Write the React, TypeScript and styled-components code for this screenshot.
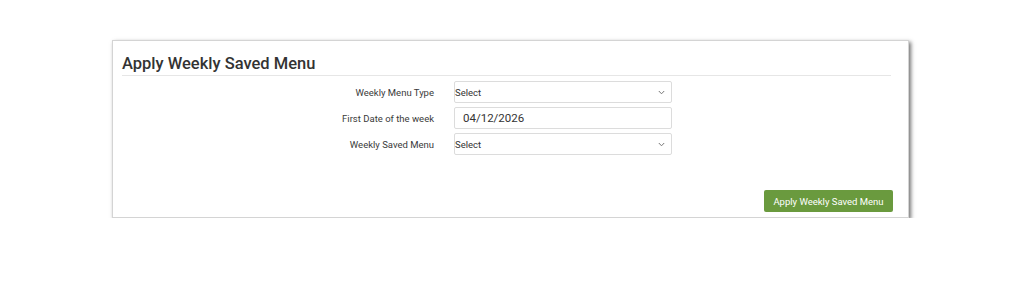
import React from "react";
import styled, { createGlobalStyle } from "styled-components";

const Global = createGlobalStyle`
  html, body { margin: 0; padding: 0; background: #ffffff; }
  body { font-family: Roboto, "Liberation Sans", Arial, sans-serif; color: #333; }
`;

const Page = styled.div`
  padding: 40px 0 0 112px;
`;

const Card = styled.section`
  box-sizing: border-box;
  width: 797px;
  height: 178px;
  background: #fff;
  border: 1px solid #d4d4d4;
  box-shadow: 2px 2px 4px rgba(0, 0, 0, 0.55);
  padding: 0 17px 0 9px;
  display: flex;
  flex-direction: column;
`;

const Title = styled.h2`
  margin: 0;
  padding-top: 11px;
  height: 23px;
  font-size: 16.5px;
  font-weight: 500;
  color: #333;
  line-height: 23px;
  border-bottom: 1px solid #e6e6e6;
`;

const Form = styled.div`
  margin-top: 5px;
  display: grid;
  grid-template-columns: 312px 218px;
  column-gap: 20px;
  row-gap: 4px;
  align-items: center;
`;

const Label = styled.label`
  text-align: right;
  font-size: 9.5px;
  color: #3a3a3a;
`;

const Field = styled.div<{ $indent?: boolean }>`
  box-sizing: border-box;
  height: 22px;
  border: 1px solid #dcdcdc;
  border-radius: 2px;
  background: #fff;
  display: flex;
  align-items: center;
  justify-content: space-between;
  padding: ${(p) => (p.$indent ? "0 0 0 8px" : "0 6px 0 0")};
  font-size: ${(p) => (p.$indent ? "11.5px" : "9.5px")};
  color: #333;
`;

const Chevron = styled.svg`
  width: 7px;
  height: 5px;
`;

const Footer = styled.div`
  margin-top: auto;
  margin-bottom: 5px;
  display: flex;
  justify-content: flex-end;
`;

const Button = styled.button`
  box-sizing: border-box;
  width: 129px;
  height: 22px;
  border: none;
  border-radius: 2px;
  background: #6a9a3e;
  color: #fff;
  font-family: Roboto, "Liberation Sans", Arial, sans-serif;
  font-size: 9.5px;
  padding: 0;
  margin-right: -2px;
`;

const Arrow = () => (
  <Chevron viewBox="0 0 7 5">
    <path d="M0.8 1 L3.5 3.8 L6.2 1" fill="none" stroke="#777" strokeWidth="1" />
  </Chevron>
);

export default function App() {
  return (
    <>
      <Global />
      <Page>
        <Card>
          <Title>Apply Weekly Saved Menu</Title>
          <Form>
            <Label>Weekly Menu Type</Label>
            <Field>
              <span>Select</span>
              <Arrow />
            </Field>
            <Label>First Date of the week</Label>
            <Field $indent>
              <span>04/12/2026</span>
            </Field>
            <Label>Weekly Saved Menu</Label>
            <Field>
              <span>Select</span>
              <Arrow />
            </Field>
          </Form>
          <Footer>
            <Button>Apply Weekly Saved Menu</Button>
          </Footer>
        </Card>
      </Page>
    </>
  );
}
